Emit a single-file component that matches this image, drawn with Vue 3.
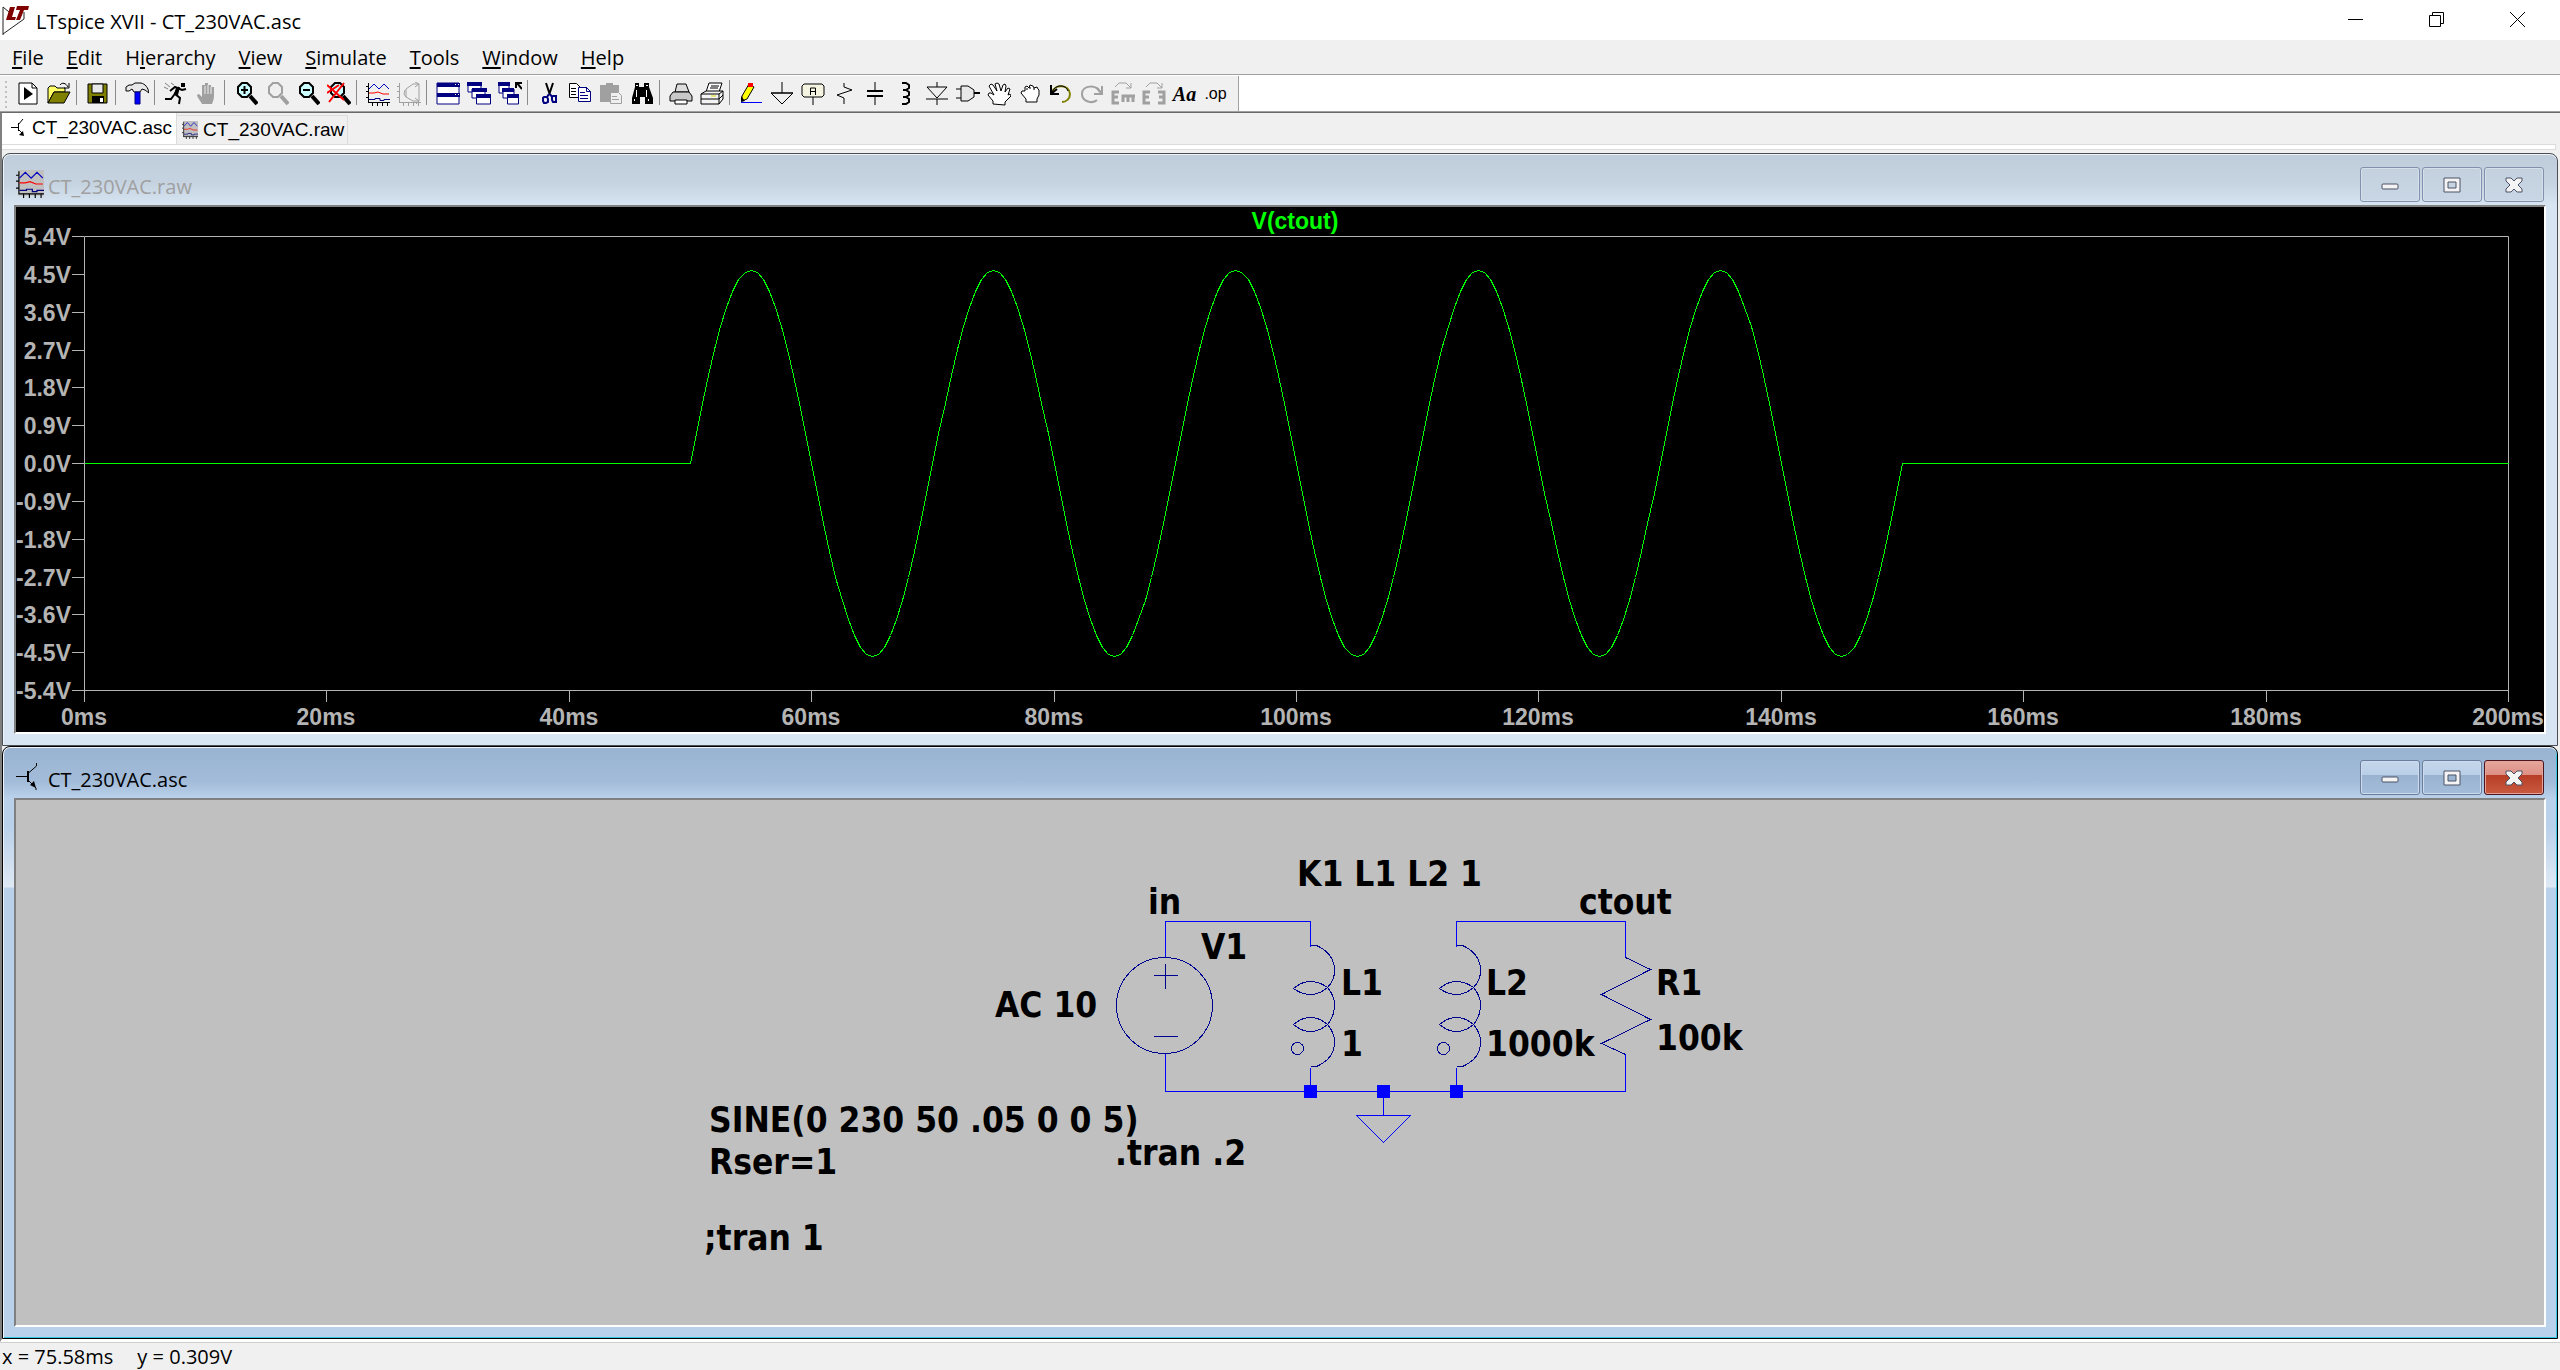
<script setup>
import { ref, computed, onMounted, onBeforeUnmount } from 'vue'

const menus = ['File', 'Edit', 'Hierarchy', 'View', 'Simulate', 'Tools', 'Window', 'Help']
const hotIndex = { Hierarchy: 1 }
const menuItems = menus.map((m) => {
  const i = hotIndex[m] ?? 0
  return { name: m, pre: m.slice(0, i), hot: m[i], post: m.slice(i + 1) }
})

const K = '#000'
const G = '#a0a0a0'
const N = '#000080'
const O = '#808000'
const lens = (c, glass) => [
  ['M8 1h5l4 4v6l-4 4h-5l-4-4v-6z', glass, c, 2],
  ['M16 14l7 8', 'none', c, 4],
]
const wavePlot = [
  ['M2.500 1v20M2 20.500h22M0 4.500h2M0 9.500h2M0 15.500h2M6.500 21v3M11.500 21v3M16.500 21v3M21.500 21v3', 'none', K, 1],
  ['M3 7l5-5 5 5 5-5 5 5', 'none', '#0000c0', 1],
  ['M3 11h5l4-1 5 2h6', 'none', '#f00', 1],
  ['M3 17.500h6v-1h5v2h4v-1h6', 'none', N, 1],
]
// Every shape is [path, fill, stroke, stroke width] in a 24 x 24 box.
const icons = {
  run: [['M3 1h13l5 5v16h-18z', '#fff', K, 1], ['M16 1v5h5', 'none', K, 1], ['M8 5v13l9-6z', K, 'none', 0]],
  open: [
    ['M1 21v-15l2-2h5l2 2h8v4h-11z', '#ff6', K, 1],
    ['M1 21l6-11h16l-6 11z', O, K, 1],
    ['M13 3c2-3 6-2 8 2M22 1v5h-5', 'none', K, 1],
  ],
  save: [['M2 2h19v19h-19z', O, K, 1], ['M6 2h11v9h-11z', '#e8e8e8', K, 1], ['M6 14h12v7h-12z', K, 'none', 0], ['M14 16h3v4h-3z', '#fff', 'none', 0]],
  hammer: [
    ['M1 5l3-2h3l3-2h6c4 1 7 4 8 10l-4-3-3-1-2 3h-6l-2-3-3 2h-3z', '#e8e8e8', K, 1],
    ['M10 10h5v12h-5z', '#00f', N, 1],
  ],
  runner: [
    ['M17 1h4v4h-4z', K, 'none', 0],
    ['M15 5l-5 8M6 9l5-4 7 3 4-1M11 12l5 4-1 6M10 13l-3 4h-6', 'none', K, 2],
    ['M12 6l4-1-2 8-4-1z', K, 'none', 0],
    ['M1 1l5 4M0 5l4 2M7 1l3 2', 'none', '#808080', 1],
  ],
  halt: [['M7 22c-2-4-5-7-5-9l2-1 3 3v-12h3v-2h3v2h3v2h3v9c0 3-1 5-2 8z', G, 'none', 0], ['M10 4v8M13 3v9M16 5v7', 'none', '#efefef', 1]],
  zoomIn: [...lens(K, '#cff'), ['M10.500 4v8M7 8h7', 'none', K, 2]],
  zoomPan: lens(G, '#efefef'),
  zoomOut: [...lens(K, '#cff'), ['M7 8h7', 'none', K, 2]],
  zoomFit: [...lens(K, '#cff'), ['M0 3l17 15M17 1l-15 19M0 11l12-8', 'none', '#f00', 2]],
  plot: wavePlot,
  fft: [
    ['M2.500 1v20M2 20.500h22M0 4.500h2M0 9.500h2M0 15.500h2M6.500 21v3M11.500 21v3M16.500 21v3M21.500 21v3', 'none', G, 1],
    ['M22 2h-6l-7 5v8l7 4h6M22 2v17M18 0l4 2-4 3M18 16l4 3-3 3M8 8l-1 4 2 3', 'none', G, 1],
  ],
  tile: [['M1 1h22v21h-22z', '#fff', N, 1], ['M1 1h23v4h-23zM1 11h23v4h-23z', N, 'none', 0], ['M19 2h1v1h-1zM22 2h1v1h-1zM19 12h1v1h-1zM22 12h1v1h-1z', '#fff', 'none', 0]],
  cascade: [
    ['M1 1h13v9h-13z', '#fff', N, 1], ['M0 0h15v4h-15z', N, 'none', 0],
    ['M5 7h13v9h-13z', '#fff', N, 1], ['M5 6h15v4h-15z', N, 'none', 0],
    ['M9.500 13h14v9h-14z', '#fff', N, 1], ['M9 12h15v4h-15z', N, 'none', 0],
  ],
  closeAll: [
    ['M1 1h10v10h-10z', '#fff', N, 1], ['M0 0h12v4h-12z', N, 'none', 0],
    ['M5 7h11v9h-11z', '#fff', N, 1], ['M4 6h12v4h-12z', N, 'none', 0],
    ['M9.500 13h11v9h-11z', '#fff', N, 1], ['M9 12h12v4h-12z', N, 'none', 0],
    ['M24 7l-5-6M18 6v-5h6', 'none', K, 2],
  ],
  cut: [
    ['M9 1l4 12M16 1l-4 12', 'none', K, 2],
    ['M12 12l-2 3M13 12l2 3', 'none', N, 2],
    ['M7 15h3l1 2v3l-2 1h-2l-1-2v-3zM16 14h3v6h-3l-1-2v-3z', 'none', N, 2],
  ],
  copy: [
    ['M1.500 1.500h7l4 4v10h-11z', '#fff', K, 1],
    ['M3 6.500h5M3 9.500h5M3 12.500h5', 'none', K, 1],
    ['M10.500 5.500h8l4 4v10h-12z', '#fff', N, 1],
    ['M18.500 5v4.500h4M12 10.500h5M12 13.500h8M12 16.500h8', 'none', N, 1],
  ],
  paste: [['M1 3h6v-2h7v2h6v7h-7v10h-12z', G, 'none', 0], ['M11.500 10.500h8l3 3v8h-11z', '#efefef', G, 1], ['M13 14.500h5M13 17.500h7', 'none', G, 1]],
  find: [['M5 1h4v4h5v-4h5v4l4 11v6h-8v-7h-5v7h-8v-6l3-11z', K, 'none', 0], ['M6 3h2v1h-2zM16 3h2v1h-2zM6 8h1v7h-1zM16 8h1v7h-1zM4 17h1v2h-1zM18 17h1v2h-1z', '#fff', 'none', 0]],
  preview: [
    ['M8 2h9l3 8h-14z', '#ddd', K, 1],
    ['M4 10h16l3 4v5h-22v-5z', '#c8c8c8', K, 1],
    ['M6 18h12v4h-12z', '#fff', K, 1],
  ],
  print: [
    ['M9 1h13l-3 9h-13z', '#fff', K, 1],
    ['M11 4h8M10 6h8', 'none', K, 1],
    ['M1 12l5-3h17v8l-4 5h-18z', '#f4f4f4', K, 1],
    ['M1 12h18v10M1 17h18M19 12l4-3M19 17l4-4', 'none', K, 1],
    ['M11 14h5', 'none', '#dd0', 1],
  ],
  wire: [['M3 14l7-12 5 3-7 12-5 2z', '#ff0', K, 1], ['M9 1h5v4h-5z', '#f00', 'none', 0], ['M2 14l4 5-4 1z', K, 'none', 0], ['M2 20.500h21', 'none', '#00f', 1]],
  ground: [['M12 0v11M1 11h22', 'none', K, 1], ['M1 11l11 11 11-11z', 'none', K, 1]],
  label: [['M3 2h18l2 2v9l-2 2h-18l-2-2v-9z', '#f4f4e0', K, 1], ['M12 15v8', 'none', K, 1], ['M9.500 13v-7h5v7M9 9.500h6', 'none', K, 1]],
  resistor: [['M12 1v4l8 3-15 5 7 3v6', 'none', K, 1]],
  capacitor: [['M12 0v9M12 14v9', 'none', K, 1], ['M4 9h16M4 14h16', 'none', K, 2]],
  inductor: [['M8 1h4l3 2v3l-3 2h-3M12 8l3 2v3l-3 2h-3M12 15l3 2v3l-3 2h-4', 'none', K, 2]],
  diode: [['M12 0v5M12 17v6M2 5h20l-10 11zM1 17h22', 'none', K, 1]],
  gate: [['M5 4h7l6 4v7l-6 4h-7z', '#e8e8e8', K, 1], ['M0 7h5M0 16h5', 'none', K, 1], ['M18 11h6', 'none', K, 2]],
  move: [['M6 22v-3l-5-6 1-2 2 0 3 2-5-9 2-2 2 1 4 6-2-7 2-1 2 1 2 7 2-6 2-1 1 2-1 6 3-4 2 1-2 6 2-1 1 2-6 6v3z', '#fff', K, 1]],
  drag: [['M8 20v-3l-5-6 1-2h3v-4l2-1 2 2 1-3 3 1 1 2 3-1 1 2 1 1v5l-2 4v3z', '#fff', K, 1], ['M9 8v-2M12 7v-2M16 8v-2', 'none', K, 1]],
  undo: [['M3 10c3-8 17-8 18 2 0 5-4 8-8 8', 'none', O, 2], ['M3 10c3-8 14-8 16-1', 'none', K, 1], ['M2 3v9h8M2 12l6-5', 'none', K, 2]],
  redo: [['M20 10c-4-8-18-7-18 2 0 8 11 10 15 6', 'none', G, 2], ['M22 4v8h-8M22 12l-5-6', 'none', G, 2]],
  mirror: [['M8 10h-6v11h6M2 15h5M12 20v-6h12M17 14v6M22 14v6', 'none', G, 3], ['M4 5l4-4h7l5 5M20 1v5h-5', 'none', G, 1]],
  rotate: [['M8 10h-6v11h6M2 15h5M16 10h6v11h-6M22 15h-5', 'none', G, 3], ['M4 5l4-4h7l5 5M20 1v5h-5', 'none', G, 1]],
}
const toolGroups = [
  ['run', 'open'], ['save'], ['hammer'], ['runner', 'halt'],
  ['zoomIn', 'zoomPan', 'zoomOut', 'zoomFit'], ['plot', 'fft'],
  ['tile', 'cascade', 'closeAll'], ['cut', 'copy', 'paste', 'find'], ['preview', 'print'],
  ['wire', 'ground', 'label', 'resistor', 'capacitor', 'inductor', 'diode', 'gate', 'move', 'drag', 'undo', 'redo', 'mirror', 'rotate', 'text', 'directive'],
]
const textTools = { text: 'Aa', directive: '.op' }

// Waveform pane: everything is derived from the pane's current size.
const pane = ref(null)
const size = ref({ w: 2528, h: 525 })
const box = computed(() => ({ l: 68, t: 29, r: size.value.w - 36, b: size.value.h - 42 }))
const xAt = (ms) => Math.round(box.value.l + ((box.value.r - box.value.l) * ms) / 200)
const yAt = (v) => Math.round(box.value.t + ((box.value.b - box.value.t) * (5.4 - v)) / 10.8)
const yTicks = computed(() =>
  Array.from({ length: 13 }, (_, i) => {
    const v = (54 - 9 * i) / 10
    return { y: yAt(v), text: v.toFixed(1) + 'V' }
  })
)
const xTicks = computed(() => Array.from({ length: 11 }, (_, i) => ({ x: xAt(i * 20), text: i * 20 + 'ms' })))
const trace = computed(() => {
  const pts = [[0, 0]]
  for (let t = 50; t <= 150; t += 0.5) pts.push([t, 4.6 * Math.sin((2 * Math.PI * (t - 50)) / 20)])
  pts.push([200, 0])
  return pts.map(([t, v]) => xAt(t) + ',' + yAt(v)).join(' ')
})
let observer
onMounted(() => {
  const measure = () => {
    size.value = { w: pane.value.clientWidth, h: pane.value.clientHeight }
  }
  measure()
  observer = new ResizeObserver(measure)
  observer.observe(pane.value)
})
onBeforeUnmount(() => observer.disconnect())

const coils = [1294, 1440]
const coilPath =
  'M0 145h6q18 8 18 25q0 10-7 17q-8 7-17 7t-17-6q8-7 17-7t17 6q7 8 7 18q0 11-7 19q-8 7-17 7t-17-7q8-7 17-7t17 7q7 8 7 18q0 16-18 24h-6'
const labels = [
  ['K1 L1 L2 1', 1281, 86], ['in', 1132, 114], ['ctout', 1563, 114], ['V1', 1185, 159],
  ['L1', 1325, 195], ['1', 1325, 256], ['L2', 1470, 195], ['1000k', 1470, 256],
  ['R1', 1640, 195], ['100k', 1640, 250], ['AC 10', 979, 217],
  ['SINE(0 230 50 .05 0 0 5)', 693, 332], ['Rser=1', 693, 374],
  ['.tran .2', 1099, 365], [';tran 1', 688, 450],
]
</script>

<template>
  <div class="app">
    <header class="titlebar">
      <svg class="logo" width="28" height="36" viewBox="0 0 28 36">
        <path d="M1 5v28M1 32l21-15v-7M1 5l6 5" fill="none" stroke="#222" stroke-width="1" />
        <path d="M8 5h5l-3 10h4l-1 3h-9z" fill="#800000" />
        <path d="M15 4h12l-1 4h-4l-4 10h-4l4-10h-4z" fill="#800000" />
      </svg>
      <h1>LTspice XVII - CT_230VAC.asc</h1>
      <div class="syscaption">
        <button aria-label="Minimize"><svg width="16" height="16"><path d="M0 7.500h15" /></svg></button>
        <button aria-label="Restore"><svg width="16" height="16"><path d="M.5 3.500h11v11h-11zM3.500 3v-2.500h11v11h-3" /></svg></button>
        <button aria-label="Close"><svg width="16" height="16"><path d="M0 0l15 15M15 0l-15 15" /></svg></button>
      </div>
    </header>

    <nav class="menubar">
      <button v-for="m in menuItems" :key="m.name">{{ m.pre }}<u>{{ m.hot }}</u>{{ m.post }}</button>
    </nav>

    <div class="toolrow">
      <div class="toolbar">
        <span class="grip"></span>
        <div v-for="(group, g) in toolGroups" :key="g" class="group">
          <button v-for="name in group" :key="name" :aria-label="name">
            <span v-if="textTools[name]" :class="['glyph', name]">{{ textTools[name] }}</span>
            <svg v-else width="24" height="24" viewBox="0 0 24 24">
              <path v-for="(s, i) in icons[name]" :key="i" :d="s[0]" :fill="s[1]" :stroke="s[2]" :stroke-width="s[3]" />
            </svg>
          </button>
        </div>
      </div>
    </div>

    <main class="mdi">
      <div class="tabs">
        <button class="tab active">
          <svg width="16" height="20" viewBox="0 0 16 20"><path d="M0 9.500h7M7.500 5v8M7 7l5-6M7 11l5 5" fill="none" stroke="#000" /><path d="M13 18l-5-1 4-4z" /></svg>
          CT_230VAC.asc
        </button>
        <button class="tab">
          <svg width="16" height="18" viewBox="0 0 24 24" preserveAspectRatio="none">
            <path d="M2 0h22v22h-22z" fill="#c0c0c0" />
            <path v-for="(s, i) in wavePlot" :key="i" :d="s[0]" :fill="s[1]" :stroke="s[2]" :stroke-width="s[3]" />
          </svg>
          CT_230VAC.raw
        </button>
      </div>
      <div class="tabstrip"></div>

      <section class="child">
        <div class="caption">
          <svg class="plot-icon" width="28" height="28" viewBox="0 0 24 24">
            <path d="M2 0h22v22h-22z" fill="#c0c0c0" />
            <path v-for="(s, i) in wavePlot" :key="i" :d="s[0]" :fill="s[1]" :stroke="s[2]" :stroke-width="s[3]" />
          </svg>
          <h2>CT_230VAC.raw</h2>
          <div class="controls">
            <button aria-label="Minimize"><svg width="18" height="16"><rect x="1" y="7" width="16" height="5" rx="1" /></svg></button>
            <button aria-label="Maximize"><svg width="18" height="16"><path d="M1 1h16v14h-16zM5 5v6h8v-6z" /></svg></button>
            <button aria-label="Close"><svg width="18" height="16"><path d="M1 1h5l3 3 3-3h5v3l-4 4 4 4v3h-5l-3-3-3 3h-5v-3l4-4-4-4z" /></svg></button>
          </div>
        </div>
        <div ref="pane" class="client wave">
          <svg class="plot" :width="size.w" :height="size.h">
            <g class="axis">
              <path :d="`M${box.l + 0.5} ${box.t + 0.5}H${box.r + 0.5}V${box.b + 0.5}H${box.l + 0.5}z`" />
              <path v-for="t in yTicks" :key="t.text" :d="`M${box.l - 12} ${t.y + 0.5}h12`" />
              <path v-for="t in xTicks" :key="t.text" :d="`M${t.x + 0.5} ${box.b}v12`" />
            </g>
            <text v-for="t in yTicks" :key="t.text" class="tick" :x="box.l - 13" :y="t.y + 9" text-anchor="end">{{ t.text }}</text>
            <text v-for="t in xTicks" :key="t.text" class="tick" :x="t.x" :y="box.b + 35" text-anchor="middle">{{ t.text }}</text>
            <text class="trace-name" :x="(box.l + box.r) / 2 - 1" y="22" text-anchor="middle">V(ctout)</text>
            <polyline class="trace" :points="trace" transform="translate(.5 .5)" />
          </svg>
        </div>
      </section>

      <section class="child focused">
        <div class="caption">
          <svg class="schematic-icon" width="28" height="28" viewBox="0 0 28 28"><path d="M0 13.500h11M20.500 0v3l-8 7M12 17l8 8v2" fill="none" stroke="#000" /><path d="M12 8v11" stroke="#000" stroke-width="2" /><path d="M20 25l-6-3 4-4z" /></svg>
          <h2>CT_230VAC.asc</h2>
          <div class="controls">
            <button aria-label="Minimize"><svg width="18" height="16"><rect x="1" y="7" width="16" height="5" rx="1" /></svg></button>
            <button aria-label="Maximize"><svg width="18" height="16"><path d="M1 1h16v14h-16zM5 5v6h8v-6z" /></svg></button>
            <button class="close" aria-label="Close"><svg width="18" height="16"><path d="M1 1h5l3 3 3-3h5v3l-4 4 4 4v3h-5l-3-3-3 3h-5v-3l4-4-4-4z" /></svg></button>
          </div>
        </div>
        <div class="client sheet">
          <svg class="schematic" viewBox="0 0 2528 525">
            <g class="net" transform="translate(.5 .5)">
              <path d="M1149 157v-36h145v25M1440 146v-25h169v36M1149 253v38h460v-38M1294 267v24M1440 267v24M1367 291v24M1340 315h54l-27 27z" />
            </g>
            <g class="symbol" transform="translate(.5 .5)">
              <circle cx="1148" cy="205" r="48" />
              <path d="M1137 175h24M1149 163v25M1137 236h24" />
              <path d="M1609 157l25 12-49 25 49 25-49 24 24 11" />
              <g v-for="x in coils" :key="x" :transform="`translate(${x} 0)`">
                <path :d="coilPath" />
                <circle cx="-13" cy="248" r="6" />
              </g>
            </g>
            <path class="junction" d="M1288 285h13v13h-13zM1361 285h13v13h-13zM1434 285h13v13h-13z" />
            <text v-for="l in labels" :key="l[0]" :x="l[1]" :y="l[2]">{{ l[0] }}</text>
          </svg>
        </div>
      </section>
    </main>

    <footer class="status"><span>x = 75.58ms</span><span>y = 0.309V</span></footer>
  </div>
</template>

<style>
body {
  margin: 0;
  background: #f0f0f0;
}
</style>

<style scoped>
.app {
  display: flex;
  flex-direction: column;
  height: 100vh;
  min-height: 900px;
  background: #f0f0f0;
  color: #000;
  font-family: "Open Sans", "Noto Sans", sans-serif;
  font-size: 20px;
}
button {
  padding: 0;
  border: 0;
  background: none;
  color: inherit;
  font: inherit;
}
h1, h2 {
  margin: 0;
  font-size: 20px;
  font-weight: 400;
}
svg {
  display: block;
}
.titlebar {
  display: flex;
  align-items: center;
  height: 40px;
  background: #fff;
}
.logo {
  margin: 0 6px 0 2px;
}
.titlebar h1 {
  flex: 1;
  padding-top: 3px;
}
.syscaption {
  display: flex;
  margin-right: 2px;
}
.syscaption button {
  display: flex;
  justify-content: center;
  width: 81px;
}
.syscaption path {
  fill: none;
  stroke: #000;
}
.menubar {
  display: flex;
  gap: 23px;
  height: 34px;
  padding-left: 12px;
  border-bottom: 1px solid #a0a0a0;
}
.menubar u {
  text-underline-offset: 2px;
}
.toolrow {
  height: 36px;
  border-bottom: 1px solid #a0a0a0;
  background: #fff;
}
.toolbar {
  display: flex;
  width: 1238px;
  height: 35px;
  margin-top: 1px;
  border-right: 1px solid #a0a0a0;
  background: #f0f0f0;
}
.grip {
  width: 2px;
  margin: 5px 5px 3px 5px;
  background: repeating-linear-gradient(#c0c0c0 0 2px, transparent 2px 5px);
}
.group {
  display: flex;
}
.group + .group {
  margin-left: 2px;
  padding-left: 5px;
  border-left: 1px solid #8c8c8c;
  border-image: linear-gradient(transparent 5px, #8c8c8c 5px 28px, transparent 28px) 1;
}
.group button {
  display: flex;
  align-items: center;
  justify-content: center;
  width: 31px;
}
.glyph {
  font-family: "Liberation Serif", serif;
  font-weight: 700;
  font-size: 20px;
  line-height: 24px;
}
.text {
  font-style: italic;
}
.directive {
  font-family: "Liberation Sans", sans-serif;
  font-weight: 400;
  font-size: 16px;
}
.mdi {
  display: flex;
  flex: 1;
  flex-direction: column;
  min-height: 0;
  padding-right: 2px;
  border-top: 1px solid #696969;
  border-left: 2px solid #808080;
  border-bottom: 3px solid #fff;
}
.tabs {
  display: flex;
  align-items: flex-end;
  height: 31px;
  font-family: "Liberation Sans", Arial, sans-serif;
  font-size: 19px;
}
.tab {
  display: flex;
  align-items: center;
  box-sizing: border-box;
  gap: 5px;
  height: 29px;
  padding: 0 3px 0 5px;
  border: 1px solid #dcdcdc;
  border-left: 0;
  border-bottom: 0;
}
.tab.active {
  height: 31px;
  padding: 0 4px 1px 9px;
  border-top: 0;
  background: #fff;
}
.tabstrip {
  height: 4px;
  margin: 0 2px 3px 0;
  border: 1px solid #dcdcdc;
  border-left: 0;
  background: #fff;
}
.child {
  display: flex;
  flex: 1 1 0;
  flex-direction: column;
  min-height: 0;
  padding: 0 11px 11px;
  border: 1px solid #4a4e54;
  border-radius: 8px 8px 0 0;
  background: linear-gradient(#bfcddb, #c6d4e2 30px, #d7e4f2 51px);
  box-shadow: inset 0 1px #eef4fa, inset 1px 0 #eef4fa;
}
.child.focused {
  border-color: #000;
  background: linear-gradient(#98b4d2, #a2bbd8 34px, #b9d1ea 51px, #b9d1ea 80px, #dfe9f5 140px, #b9d1ea 141px);
  box-shadow: inset 0 1px #eef4fa, inset 1px 0 #eef4fa, inset -1px -1px #35c6e0;
}
.caption {
  display: flex;
  height: 51px;
  color: #000;
}
.child:not(.focused) h2 {
  color: #a0a0a0;
}
.caption h2 {
  flex: 1;
  padding-top: 19px;
  line-height: 28px;
}
.plot-icon,
.schematic-icon {
  margin: 16px 4px 0 2px;
}
.controls {
  display: flex;
  gap: 2px;
  margin-right: 2px;
  padding-top: 13px;
}
.controls button {
  display: flex;
  align-items: center;
  justify-content: center;
  box-sizing: border-box;
  width: 60px;
  height: 35px;
  border: 1px solid #8191ab;
  border-radius: 3px;
  background: linear-gradient(#c3d1df, #c8d6e5);
  box-shadow: inset 0 0 0 1px #d5e0eb;
}
.focused .controls button {
  border-color: #6b7f9d;
  background: linear-gradient(#c4d6eb, #bacfe7 14px, #98b2d0 14px, #a4bdd9);
  box-shadow: inset 0 0 0 1px #ccdcee;
}
.focused .controls .close {
  border-color: #4b1420;
  background: linear-gradient(#e6a79d, #dd8f84 14px, #b73d26 14px, #c85a40);
  box-shadow: inset 0 0 0 1px #e5a496;
}
.controls svg > * {
  fill: #f4f4f4;
  fill-rule: evenodd;
  stroke: #4c5266;
  stroke-width: 1;
}
.client {
  flex: 1;
  min-height: 0;
  border: 2px solid #fff;
  border-top-color: #808080;
  border-left-color: #808080;
  background: #c0c0c0;
  overflow: hidden;
}
.wave {
  position: relative;
  background: #000;
}
.plot {
  position: absolute;
}
.axis path {
  fill: none;
  stroke: #b4b4b4;
}
.tick,
.trace-name {
  fill: #b4b4b4;
  font: 700 23px "Liberation Sans", Arial, sans-serif;
}
.trace-name {
  fill: #0f0;
}
.trace {
  fill: none;
  stroke: #0f0;
  shape-rendering: crispEdges;
}
.schematic {
  width: 100%;
}
.net,
.symbol {
  fill: none;
  stroke: #00f;
  shape-rendering: crispEdges;
}
.symbol {
  stroke: #000090;
}
.junction {
  fill: #00f;
}
.schematic text {
  font: 700 35px "DejaVu Sans Condensed", "DejaVu Sans", sans-serif;
}
.status {
  display: flex;
  gap: 24px;
  box-sizing: border-box;
  height: 28px;
  padding-left: 2px;
  border-top: 1px solid #d0d0d0;
  line-height: 28px;
}
</style>
